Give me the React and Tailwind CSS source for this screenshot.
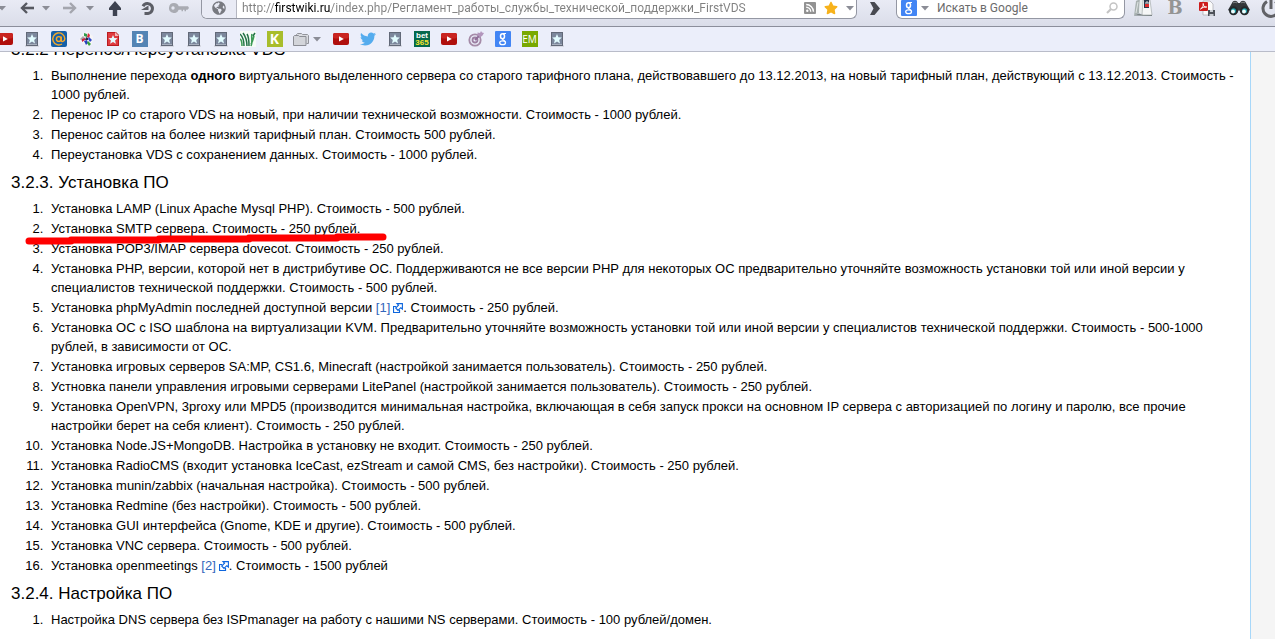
import { FaGlobeAmericas, FaStar, FaTwitter } from "react-icons/fa";

const priceList = [
  "Установка LAMP (Linux Apache Mysql PHP). Стоимость - 500 рублей.",
  "Установка SMTP сервера. Стоимость - 250 рублей.",
  "Установка POP3/IMAP сервера dovecot. Стоимость - 250 рублей.",
  "Установка PHP, версии, которой нет в дистрибутиве ОС. Поддерживаются не все версии PHP для некоторых ОС предварительно уточняйте возможность установки той или иной версии у специалистов технической поддержки. Стоимость - 500 рублей.",
  { before: "Установка phpMyAdmin последней доступной версии ", ref: "[1]", after: ". Стоимость - 250 рублей." },
  "Установка ОС с ISO шаблона на виртуализации KVM. Предварительно уточняйте возможность установки той или иной версии у специалистов технической поддержки. Стоимость - 500-1000 рублей, в зависимости от ОС.",
  "Установка игровых серверов SA:MP, CS1.6, Minecraft (настройкой занимается пользователь). Стоимость - 250 рублей.",
  "Устновка панели управления игровыми серверами LitePanel (настройкой занимается пользователь). Стоимость - 250 рублей.",
  "Установка OpenVPN, 3proxy или MPD5 (производится минимальная настройка, включающая в себя запуск прокси на основном IP сервера с авторизацией по логину и паролю, все прочие настройки берет на себя клиент). Стоимость - 250 рублей.",
  "Установка Node.JS+MongoDB. Настройка в установку не входит. Стоимость - 250 рублей.",
  "Установка RadioCMS (входит установка IceCast, ezStream и самой CMS, без настройки). Стоимость - 250 рублей.",
  "Установка munin/zabbix (начальная настройка). Стоимость - 500 рублей.",
  "Установка Redmine (без настройки). Стоимость - 500 рублей.",
  "Установка GUI интерфейса (Gnome, KDE и другие). Стоимость - 500 рублей.",
  "Установка VNC сервера. Стоимость - 500 рублей.",
  { before: "Установка openmeetings ", ref: "[2]", after: ". Стоимость - 1500 рублей" },
];

function Caret({ className = "" }) {
  return (
    <svg viewBox="0 0 8 5" className={`h-[5px] w-2 ${className}`} fill="#8b8d96">
      <path d="M0 0h8L4 4.5z" />
    </svg>
  );
}

function ArrowIcon({ color, flip }) {
  return (
    <svg viewBox="0 0 14 12" className={flip ? "h-3 w-3.5 -scale-x-100" : "h-3 w-3.5"} fill="none" stroke={color}>
      <path d="M14 6H2" strokeWidth="2.6" />
      <path d="M7 1L2 6l5 5" strokeWidth="2.4" />
    </svg>
  );
}

function UpIcon() {
  return (
    <svg viewBox="0 0 14 15" className="h-[15px] w-3.5" fill="#3d4250">
      <path d="M7 0l6 7v2H9.200v6H4.800V9H1V7z" />
    </svg>
  );
}

function ReloadIcon() {
  return (
    <svg viewBox="0 0 15 15" className="h-[15px] w-[15px]">
      <path d="M3 5.200A5 5 0 1 1 8 12.500H4.500" fill="none" stroke="#5c5e66" strokeWidth="3" />
      <path d="M1 9h7.500V4.500z" fill="#5c5e66" />
    </svg>
  );
}

function KeyIcon() {
  return (
    <svg viewBox="0 0 20 10" className="h-2.5 w-5" fill="#a9abb2">
      <path fillRule="evenodd" d="M5 0a5 5 0 0 1 4.700 3.300H19l1 1.700-1.500 1.700H17v1.500h-1.500V6.700H14v1.500h-1.500V6.700H9.700A5 5 0 1 1 5 0zM4 3.300a1.700 1.700 0 1 0 0 3.400 1.700 1.700 0 0 0 0-3.400z" />
    </svg>
  );
}

function GoogleIcon() {
  return (
    <svg viewBox="0 0 16 16" className="h-4 w-4 shrink-0">
      <rect width="16" height="16" rx="1" fill="#4285f4" />
      <g fill="none" stroke="#fff">
        <ellipse cx="7.500" cy="5.200" rx="2" ry="2.500" strokeWidth="1.500" />
        <path d="M8 2.500h3M8 7.700c-1.500 1 1.800 1.700 2.300 3.200" strokeWidth="1.200" />
        <ellipse cx="7.600" cy="11.800" rx="2.900" ry="1.900" strokeWidth="1.300" />
      </g>
    </svg>
  );
}

function RssIcon() {
  return (
    <svg viewBox="0 0 12 12" className="h-3 w-3">
      <rect width="12" height="12" rx="1" fill="#929292" />
      <circle cx="3.300" cy="8.800" r="1.200" fill="#fff" />
      <path d="M2.200 5.200a4.500 4.500 0 0 1 4.500 4.500M2.200 2.500a7.300 7.300 0 0 1 7.300 7.300" fill="none" stroke="#fff" strokeWidth="1.400" />
    </svg>
  );
}

function YoutubeIcon() {
  return (
    <svg viewBox="0 0 16 12" className="h-3 w-4">
      <rect width="16" height="12" rx="2" fill="#b00f0c" />
      <rect width="16" height="5.500" rx="2" fill="#c92420" />
      <path d="M6 3.200v5.400L10.800 6z" fill="#fff" />
    </svg>
  );
}

function StarTile() {
  return (
    <svg viewBox="0 0 16 16" className="h-4 w-4">
      <path d="M1 14.500h14v1H1z" fill="#c3c5cd" />
      <path d="M2 1h12v14H2z" fill="#626978" />
      <path d="M3 2h10v11H3z" fill="#7c879c" />
      <path d="M3 13h10v1H3z" fill="#a8afbd" />
      <path d="M8 3l1.400 3.300 3.400.3-2.600 2.300.8 3.500L8 10.600l-3 1.800.8-3.500-2.600-2.300 3.400-.3z" fill="#e2fcff" />
    </svg>
  );
}

function RedStarTile() {
  return (
    <svg viewBox="0 0 16 16" className="h-4 w-4">
      <path d="M2 1h9l3 3v11H2z" fill="#b91c20" />
      <path d="M3 2h7l3 3v9H3z" fill="#df3b3f" />
      <path d="M10 1v4h4z" fill="#f4b5b5" />
      <path d="M8 4l1.300 3 3.300.3-2.500 2.100.8 3.300L8 11l-2.900 1.700.8-3.300-2.500-2.100L6.700 7z" fill="#e4fbff" />
    </svg>
  );
}

function MailIcon() {
  return (
    <svg viewBox="0 0 16 16" className="h-4 w-4">
      <rect width="16" height="16" rx="2" fill="#1560a8" />
      <g fill="none" stroke="#f6a928" strokeWidth="1.400">
        <circle cx="7.800" cy="8" r="2.400" />
        <path d="M10.200 5.500v3.800c0 1.900 3.600 1.400 3.600-1.500A6 6 0 1 0 11 13" />
      </g>
    </svg>
  );
}

function PinwheelIcon() {
  return (
    <svg viewBox="0 0 16 16" className="h-4 w-4">
      <path d="M5 3l4-2 6 4-1 8-4 2-5-3-4-2 1-3z" fill="#f7f5f6" />
      <path d="M6 2l3 1v3L6 5z" fill="#2f9c4d" />
      <path d="M10 2l2 2-1 3-2-1z" fill="#d8283d" />
      <path d="M11 6l3 3-2 2-2-3z" fill="#2f48c9" />
      <path d="M2 8l3-3 2 2-3 3z" fill="#aaa5ab" />
      <path d="M4 8l3-1v2l-3 2z" fill="#c9203f" />
      <path d="M6 10l3-1 1 3-2 2z" fill="#2940c0" />
      <path d="M10 10l3 3-2 2-2-3z" fill="#35a13b" />
      <path d="M8 6l2 1v2H7z" fill="#302a48" />
    </svg>
  );
}

function GrassIcon() {
  return (
    <svg viewBox="0 0 16 16" className="h-4 w-4" fill="none" stroke="#237346">
      <rect width="16" height="16" fill="#f6fbf7" stroke="none" />
      <path d="M0 3c3 3 4 7 4 12M3 2c3 4 4 8 4 13M7 3c2 3 2 8 2 12" strokeWidth="1.500" />
      <path d="M0 8c2 1 2 4 2 7M12 3c-1 4 1 8-1 12M14 5c-1 3-1 5-3 8" stroke="#3c9a55" strokeWidth="1.600" />
      <path d="M15 2l-2 3" strokeWidth="1.500" />
    </svg>
  );
}

function FolderIcon() {
  return (
    <svg viewBox="0 0 16 13" className="h-[13px] w-4">
      <path d="M3.500 3V1.500l1-1h4l1 1h5l1 1v8h-2" fill="#d9dbe0" stroke="#92949b" />
      <path d="M.5 3.500l1-1h4l1 1h6.500v9H.5z" fill="#d3d5da" stroke="#8b8d94" />
    </svg>
  );
}

function TargetIcon() {
  return (
    <svg viewBox="0 0 16 16" className="h-4 w-4" fill="none">
      <circle cx="7" cy="9" r="5.700" stroke="#a58ba8" strokeWidth="1.800" />
      <circle cx="7" cy="9" r="2.500" stroke="#9c7fa2" strokeWidth="1.800" />
      <path d="M7 9l5-5" stroke="#8e6d98" strokeWidth="2" />
      <path d="M9.500 4V1.500L12 2l1-2 1 1.500L16 2l-1.500 2.500L12 6.500z" fill="#b396bd" />
    </svg>
  );
}

function Bet365Icon() {
  return (
    <svg viewBox="0 0 16 16" className="h-4 w-4">
      <rect width="16" height="16" fill="#04694c" />
      <text x="8" y="7" textAnchor="middle" fontFamily="Liberation Sans" fontWeight="700" fontSize="8" fill="#fff">bet</text>
      <text x="8" y="14" textAnchor="middle" fontFamily="Liberation Sans" fontWeight="700" fontSize="8" fill="#f6e52d">365</text>
    </svg>
  );
}

const tileStyles = {
  vk: "bg-[#5484b4] text-xs font-bold",
  k: "bg-[#a8bd2c] text-sm font-bold",
  em: "bg-[#78a900] text-[10px]",
};

function LetterTile({ kind, children }) {
  return (
    <span className={`flex h-4 w-4 items-center justify-center font-['Open_Sans',sans-serif] leading-4 text-white ${tileStyles[kind]}`}>
      {children}
    </span>
  );
}

function BookIcon() {
  return (
    <svg viewBox="0 0 20 18" className="h-[18px] w-5">
      <path d="M3 2l4-2-1 14-5 3z" fill="#a9b2b1" />
      <path d="M7 0l4 2v13l-5-1z" fill="#e8ecec" />
      <path d="M10 1h7l2 15H9z" fill="#f6f7f7" stroke="#a6acad" strokeWidth=".7" />
      <path d="M1 16.500l5-2 4 1.500h9v1z" fill="#7b8485" />
      <path d="M5 3L3 14" stroke="#dfe4e4" />
      <path d="M11 1h5v8h-5z" fill="#28364a" />
      <path d="M12 5h4v3h-4z" fill="#df2c2c" />
      <path d="M13 5V3h2v2" fill="none" stroke="#d8dee0" />
    </svg>
  );
}

function PdfIcon() {
  return (
    <svg viewBox="0 0 17 17" className="h-[17px] w-[17px]">
      <path d="M4 1h7l3 3v11H4z" fill="#fafafa" stroke="#a8a8ae" strokeWidth=".7" />
      <rect y="2" width="9" height="9" rx="1" fill="#cd1d1d" />
      <path d="M1.500 9c2-1 3-3 2.700-5.500 0 2.500 1.500 4 3.500 3.500C5.500 6.700 3 7.700 1.500 9z" fill="none" stroke="#fff" />
      <rect x="9" y="10" width="7" height="6" fill="#4d5158" />
      <path d="M11 10h3v2h-3zM10.500 14h4v2h-4z" fill="#c7cbd1" />
    </svg>
  );
}

function BinocularsIcon() {
  return (
    <svg viewBox="0 0 22 16" className="h-4 w-[22px]">
      <path d="M4 3c1-3 5-3 6 0h2c1-3 5-3 6 0l4 7-4 3h-5l-2-3-2 3H4l-4-3z" fill="#34383b" />
      <path d="M5 3c1-1 3-1 4 0M13 3c1-1 3-1 4 0" fill="none" stroke="#85898c" />
      <circle cx="5.500" cy="10.700" r="3.500" fill="#16a4ad" stroke="#25292c" strokeWidth="2" />
      <circle cx="16.500" cy="10.700" r="3.500" fill="#16a4ad" stroke="#25292c" strokeWidth="2" />
      <circle cx="5" cy="11.500" r="1.900" fill="#effcfc" />
      <circle cx="16" cy="11.500" r="1.900" fill="#effcfc" />
    </svg>
  );
}

function PowerIcon() {
  return (
    <svg viewBox="0 0 22 22" className="h-[22px] w-[22px]" fill="none" stroke="#616266" strokeWidth="3">
      <path d="M7 4.500a8 8 0 1 0 8 0" />
      <path d="M11 0v12" />
    </svg>
  );
}

function ExternalIcon() {
  return (
    <svg viewBox="0 0 10 10" className="ml-[3px] inline h-2.5 w-2.5 align-[-1px]" fill="none" stroke="#0e66dd">
      <path d="M3 3.500H.5v6h6V7" strokeWidth="1.200" />
      <path d="M4 .6h5.400V6L7.800 4.700 5 7.400 2.700 5l2.800-2.800z" fill="#fff" strokeWidth="1.100" />
    </svg>
  );
}

const bookmarks = [
  ["YouTube", <YoutubeIcon />],
  ["Закладка", <StarTile />],
  ["Почта", <MailIcon />],
  ["Каталог", <PinwheelIcon />],
  ["Избранное", <RedStarTile />],
  ["ВКонтакте", <LetterTile kind="vk">B</LetterTile>],
  ["Закладка", <StarTile />],
  ["Закладка", <StarTile />],
  ["Закладка", <StarTile />],
  ["Природа", <GrassIcon />],
  ["K", <LetterTile kind="k">K</LetterTile>],
  ["Папка", <FolderIcon />, true],
  ["YouTube", <YoutubeIcon />],
  ["Twitter", <FaTwitter className="h-4 w-4 text-[#55acee]" />],
  ["Закладка", <StarTile />],
  ["bet365", <Bet365Icon />],
  ["YouTube", <YoutubeIcon />],
  ["Цель", <TargetIcon />],
  ["Google", <GoogleIcon />],
  ["EM", <LetterTile kind="em">EM</LetterTile>],
  ["Закладка", <StarTile />],
];

function ToolButton({ label, className = "w-8", children }) {
  return (
    <button type="button" aria-label={label} className={`flex h-4 shrink-0 items-center justify-center ${className}`}>
      {children}
    </button>
  );
}

function AddressBar() {
  return (
    <div className="flex h-[19px] min-w-0 flex-1 overflow-hidden rounded-b-md border border-t-0 border-[#9497a3] bg-white">
      <div className="flex w-[35px] shrink-0 items-start justify-center border-r border-[#b4b6c0] bg-[#e9ebf5] pt-px">
        <FaGlobeAmericas className="h-3.5 w-3.5 text-[#777980]" />
      </div>
      <input
        type="text"
        aria-label="Адрес"
        defaultValue="http://firstwiki.ru/index.php/Регламент_работы_службы_технической_поддержки_FirstVDS"
        className="h-4 min-w-0 flex-1 bg-[linear-gradient(90deg,#808080_38px,#000_38px,#000_94px,#808080_94px)] bg-clip-text pl-[5px] font-[Roboto,sans-serif] text-xs leading-4 text-transparent outline-none"
      />
      <div className="flex h-4 items-center gap-2 pr-0.5">
        <RssIcon />
        <FaStar className="h-3.5 w-3.5 text-[#f7b21b]" />
        <Caret />
      </div>
    </div>
  );
}

function SearchBar() {
  return (
    <div className="flex h-[19px] w-[229px] shrink-0 rounded-b-md border border-t-0 border-[#9497a3] bg-white pr-1.5 pl-1">
      <GoogleIcon />
      <Caret className="mt-1.5 ml-1 shrink-0" />
      <input
        type="text"
        aria-label="Поиск"
        placeholder="Искать в Google"
        className="ml-2 h-4 min-w-0 flex-1 font-[Roboto,sans-serif] text-xs leading-4 outline-none placeholder:text-[#6b6b6b]"
      />
      <svg viewBox="0 0 12 12" className="mt-0.5 h-3 w-3 shrink-0" fill="none" stroke="#c4c4c4">
        <circle cx="7.500" cy="4.500" r="3.500" strokeWidth="1.500" />
        <path d="M5 7l-4 4" strokeWidth="2.200" />
      </svg>
    </div>
  );
}

function Toolbar() {
  return (
    <div className="flex h-[27px] overflow-hidden border-b border-[#8b8e9b] bg-linear-to-b from-[#e9ebf5] to-[#dadde9]">
      <ToolButton label="История" className="-ml-1 w-3"><Caret /></ToolButton>
      <ToolButton label="Назад" className="ml-1.5 w-[26px]"><ArrowIcon color="#565860" /></ToolButton>
      <ToolButton label="Список назад" className="w-3"><Caret /></ToolButton>
      <ToolButton label="Вперёд" className="ml-1 w-7"><ArrowIcon color="#a4a6ae" flip /></ToolButton>
      <ToolButton label="Список вперёд" className="w-3"><Caret /></ToolButton>
      <ToolButton label="Вверх" className="ml-[3px] w-8"><UpIcon /></ToolButton>
      <ToolButton label="Обновить"><ReloadIcon /></ToolButton>
      <ToolButton label="Пароли" className="mr-[6px] w-8"><KeyIcon /></ToolButton>
      <AddressBar />
      <ToolButton label="Перейти" className="w-[39px] pr-1">
        <svg viewBox="0 0 10 13" className="h-[13px] w-2.5" fill="#484a51">
          <path d="M0 0h4.500L10 6.500 4.500 13H0l3.500-6.500z" />
        </svg>
      </ToolButton>
      <SearchBar />
      <ToolButton label="Словарь" className="ml-0.5 w-8"><BookIcon /></ToolButton>
      <ToolButton label="Жирный" className="w-8 font-['DejaVu_Serif',serif] text-lg leading-4 font-bold text-[#949494]">B</ToolButton>
      <ToolButton label="PDF"><PdfIcon /></ToolButton>
      <ToolButton label="Найти"><BinocularsIcon /></ToolButton>
      <ToolButton label="Выключить" className="-mr-3 w-8"><PowerIcon /></ToolButton>
    </div>
  );
}

function BookmarksBar() {
  return (
    <nav className="flex h-[25px] overflow-hidden border-b border-[#b9bcc9] bg-[#ebeefa]">
      <div className="-ml-[9px] flex">
        {bookmarks.map(([label, icon, menu], i) => (
          <a key={i} href="#" aria-label={label} className={menu ? "flex w-[39px] items-center gap-1 pl-[5px]" : "flex w-[27px] items-center justify-center"}>
            {icon}
            {menu ? <Caret /> : null}
          </a>
        ))}
      </div>
    </nav>
  );
}

function Heading({ children }) {
  return <h3 className="pt-2 pb-[7px] pl-[11px] text-[17px] leading-[19px]">{children}</h3>;
}

function List({ children }) {
  return <ol className="list-decimal pr-3 pl-[47px] text-[13px] leading-[19px]">{children}</ol>;
}

// red marker stroke over the SMTP line
function Marker() {
  return (
    <svg viewBox="0 0 362 12" className="pointer-events-none absolute top-[14px] -left-[22px] z-10 h-3 w-[362px]">
      <path d="M4 8H46V7H134V6H224V5H312V4H358" fill="none" stroke="#f00" strokeWidth="7" strokeLinecap="round" strokeLinejoin="round" />
    </svg>
  );
}

export default function App() {
  return (
    <div className="flex h-screen flex-col overflow-hidden font-['Liberation_Sans',Arial,sans-serif] text-black">
      <header className="shrink-0">
        <Toolbar />
        <BookmarksBar />
      </header>
      <div className="flex min-h-0 flex-1 overflow-hidden bg-[#f5f5f5] pr-6">
        <main className="min-w-0 flex-1 border-r border-[#a7d7f9] bg-white">
          <div className="-mt-5">
            <Heading>3.2.2 Перенос/Переустановка VDS</Heading>
            <List>
              <li className="mb-px pl-1">
                Выполнение перехода <b>одного</b> виртуального выделенного сервера со старого тарифного плана, действовавшего до 13.12.2013, на новый тарифный план, действующий с 13.12.2013. Стоимость - 1000 рублей.
              </li>
              <li className="mb-px pl-1">Перенос IP со старого VDS на новый, при наличии технической возможности. Стоимость - 1000 рублей.</li>
              <li className="mb-px pl-1">Перенос сайтов на более низкий тарифный план. Стоимость 500 рублей.</li>
              <li className="mb-px pl-1">Переустановка VDS с сохранением данных. Стоимость - 1000 рублей.</li>
            </List>
            <Heading>3.2.3. Установка ПО</Heading>
            <List>
              {priceList.map((item, i) => (
                <li key={i} className="relative mb-px pl-1">
                  {item.ref ? (
                    <>
                      {item.before}
                      <a href="#" className="text-[#3366bb]">{item.ref}<ExternalIcon /></a>
                      {item.after}
                    </>
                  ) : item}
                  {i === 1 ? <Marker /> : null}
                </li>
              ))}
            </List>
            <Heading>3.2.4. Настройка ПО</Heading>
            <List>
              <li className="mb-px pl-1">Настройка DNS сервера без ISPmanager на работу с нашими NS серверами. Стоимость - 100 рублей/домен.</li>
            </List>
          </div>
        </main>
      </div>
    </div>
  );
}
